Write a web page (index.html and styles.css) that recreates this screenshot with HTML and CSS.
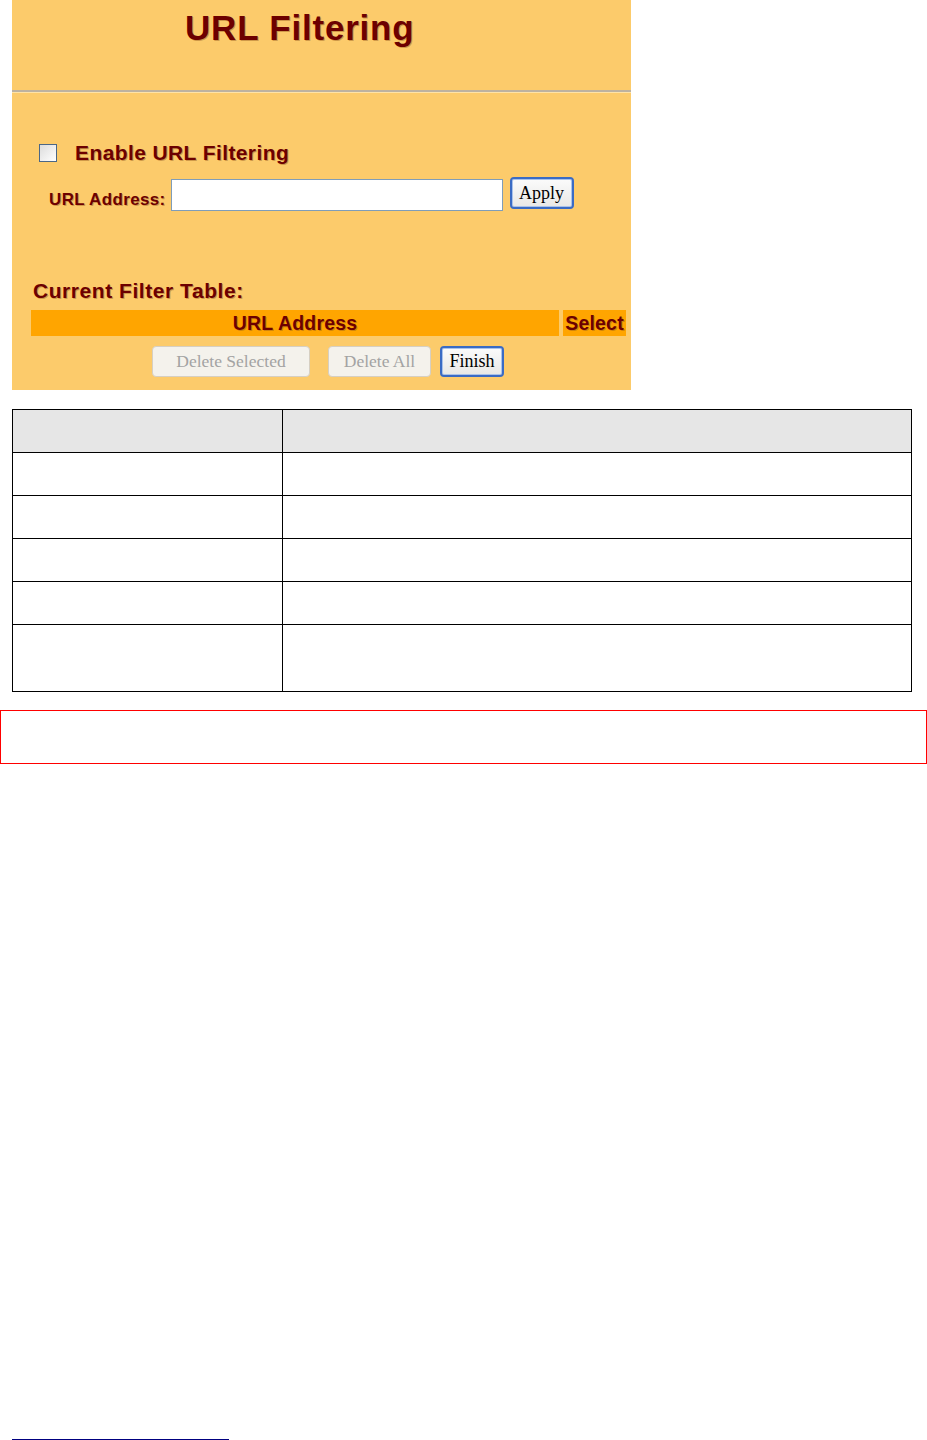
FILE: index.html
```html
<!DOCTYPE html>
<html lang="en">
<head>
  <meta charset="UTF-8" />
  <title>URL Filtering</title>
  <link rel="stylesheet" href="styles.css">
</head>
<body>
  <div class="panel">
    <div class="title-bar">
      <h1>URL Filtering</h1>
    </div>
    <div class="rule"></div>

    <div class="enable-row">
      <span class="checkbox"></span>
      <span class="label-big">Enable URL Filtering</span>
    </div>

    <div class="url-row">
      <span class="label-small">URL Address:</span>
      <span class="text-input"></span>
      <span class="btn btn-active btn-apply">Apply</span>
    </div>

    <div class="table-title">Current Filter Table:</div>
    <div class="filter-head">
      <div class="head-url">URL Address</div>
      <div class="head-select">Select</div>
    </div>

    <div class="button-row">
      <span class="btn btn-disabled btn-del-sel">Delete Selected</span>
      <span class="btn btn-disabled btn-del-all">Delete All</span>
      <span class="btn btn-active btn-finish">Finish</span>
    </div>
  </div>

  <table class="desc-table">
    <tr class="head"><td class="col1"></td><td></td></tr>
    <tr><td class="col1"></td><td></td></tr>
    <tr><td class="col1"></td><td></td></tr>
    <tr><td class="col1"></td><td></td></tr>
    <tr><td class="col1"></td><td></td></tr>
    <tr class="tall"><td class="col1"></td><td></td></tr>
  </table>

  <div class="note-box"></div>

  <div class="footnote-rule"></div>
</body>
</html>
```

FILE: styles.css
```css
:root {
  --panel-bg: #fccb6b;
  --head-bg: #ffa500;
  --text-red: #6c0000;
  --shadow: rgba(150, 90, 30, 0.45);
}

body {
  margin: 0;
  font-family: 'Liberation Sans', Arial, sans-serif;
  background: #ffffff;
}

.panel {
  width: 619px;
  height: 390px;
  margin-left: 12px;
  background: var(--panel-bg);
  box-sizing: border-box;
}

.title-bar {
  height: 90px;
  padding-top: 8px;
  padding-left: 173px;
  box-sizing: border-box;
}

h1 {
  margin: 0;
  font-size: 35px;
  line-height: 40px;
  font-weight: bold;
  letter-spacing: 0.8px;
  color: var(--text-red);
  text-shadow: 1px 1px 0 var(--shadow);
}

.rule {
  height: 0;
  border-top: 2px solid #bdb2a0;
  border-bottom: 1px solid #ffe3a6;
}

.enable-row {
  display: flex;
  align-items: center;
  height: 24px;
  margin-top: 48px;
  padding-left: 27px;
}

.checkbox {
  width: 16px;
  height: 16px;
  border: 1px solid #4b6786;
  background: linear-gradient(135deg, #dcdcdc, #ffffff);
  margin-right: 18px;
}

.label-big {
  font-size: 21px;
  font-weight: bold;
  letter-spacing: 0.4px;
  color: var(--text-red);
  text-shadow: 1px 1px 0 var(--shadow);
}

.url-row {
  display: flex;
  align-items: center;
  height: 34px;
  margin-top: 11px;
  padding-left: 37px;
}

.label-small {
  font-size: 17px;
  font-weight: bold;
  letter-spacing: 0.35px;
  color: var(--text-red);
  text-shadow: 1px 1px 0 var(--shadow);
  margin-top: 13px;
}

.text-input {
  width: 332px;
  height: 32px;
  box-sizing: border-box;
  border: 1px solid #7f9db9;
  background: #ffffff;
  margin-left: 5px;
  margin-top: 4px;
}

.btn {
  display: inline-flex;
  align-items: center;
  justify-content: center;
  box-sizing: border-box;
  font-family: 'Liberation Serif', 'Times New Roman', serif;
  font-size: 18px;
  border-radius: 4px;
  height: 31px;
}

.btn-active {
  border: 2px solid #3a6bc4;
  background: linear-gradient(#fbfbfb, #e8e8e6);
  color: #000000;
  box-shadow: inset 0 0 0 1px #a9c2ea;
}

.btn-disabled {
  border: 1px solid #d6cfc2;
  background: #f4f2ec;
  color: #a3a3a3;
  font-size: 17.5px;
}

.btn-apply {
  width: 64px;
  height: 32px;
  margin-left: 7px;
}

.table-title {
  margin-top: 69px;
  padding-left: 21px;
  font-size: 21px;
  line-height: 24px;
  font-weight: bold;
  letter-spacing: 0.55px;
  color: var(--text-red);
  text-shadow: 1px 1px 0 var(--shadow);
}

.filter-head {
  display: flex;
  gap: 4px;
  margin-top: 7px;
  padding-left: 19px;
  padding-right: 5px;
}

.filter-head > div {
  height: 26px;
  line-height: 26px;
  background: var(--head-bg);
  font-size: 19.5px;
  font-weight: bold;
  letter-spacing: 0.2px;
  color: var(--text-red);
  text-shadow: 1px 1px 0 var(--shadow);
  text-align: center;
}

.head-url {
  width: 528px;
}

.head-select {
  flex: 1;
}

.button-row {
  display: flex;
  margin-top: 10px;
  padding-left: 140px;
}

.btn-del-sel {
  width: 158px;
}

.btn-del-all {
  width: 103px;
  margin-left: 18px;
}

.btn-finish {
  width: 64px;
  margin-left: 9px;
}

.desc-table {
  margin-top: 19px;
  margin-left: 12px;
  width: 900px;
  border-collapse: collapse;
}

.desc-table td {
  border: 1px solid #000000;
  height: 42px;
  padding: 0;
}

.desc-table .col1 {
  width: 269px;
}

.desc-table .head td {
  background: #e6e6e6;
}

.desc-table .tall td {
  height: 66px;
}

.note-box {
  margin-top: 18px;
  height: 54px;
  border: 1px solid #ff0000;
  box-sizing: border-box;
}

.footnote-rule {
  margin-top: 675px;
  margin-left: 12px;
  width: 217px;
  border-top: 1px solid #000080;
}
```
